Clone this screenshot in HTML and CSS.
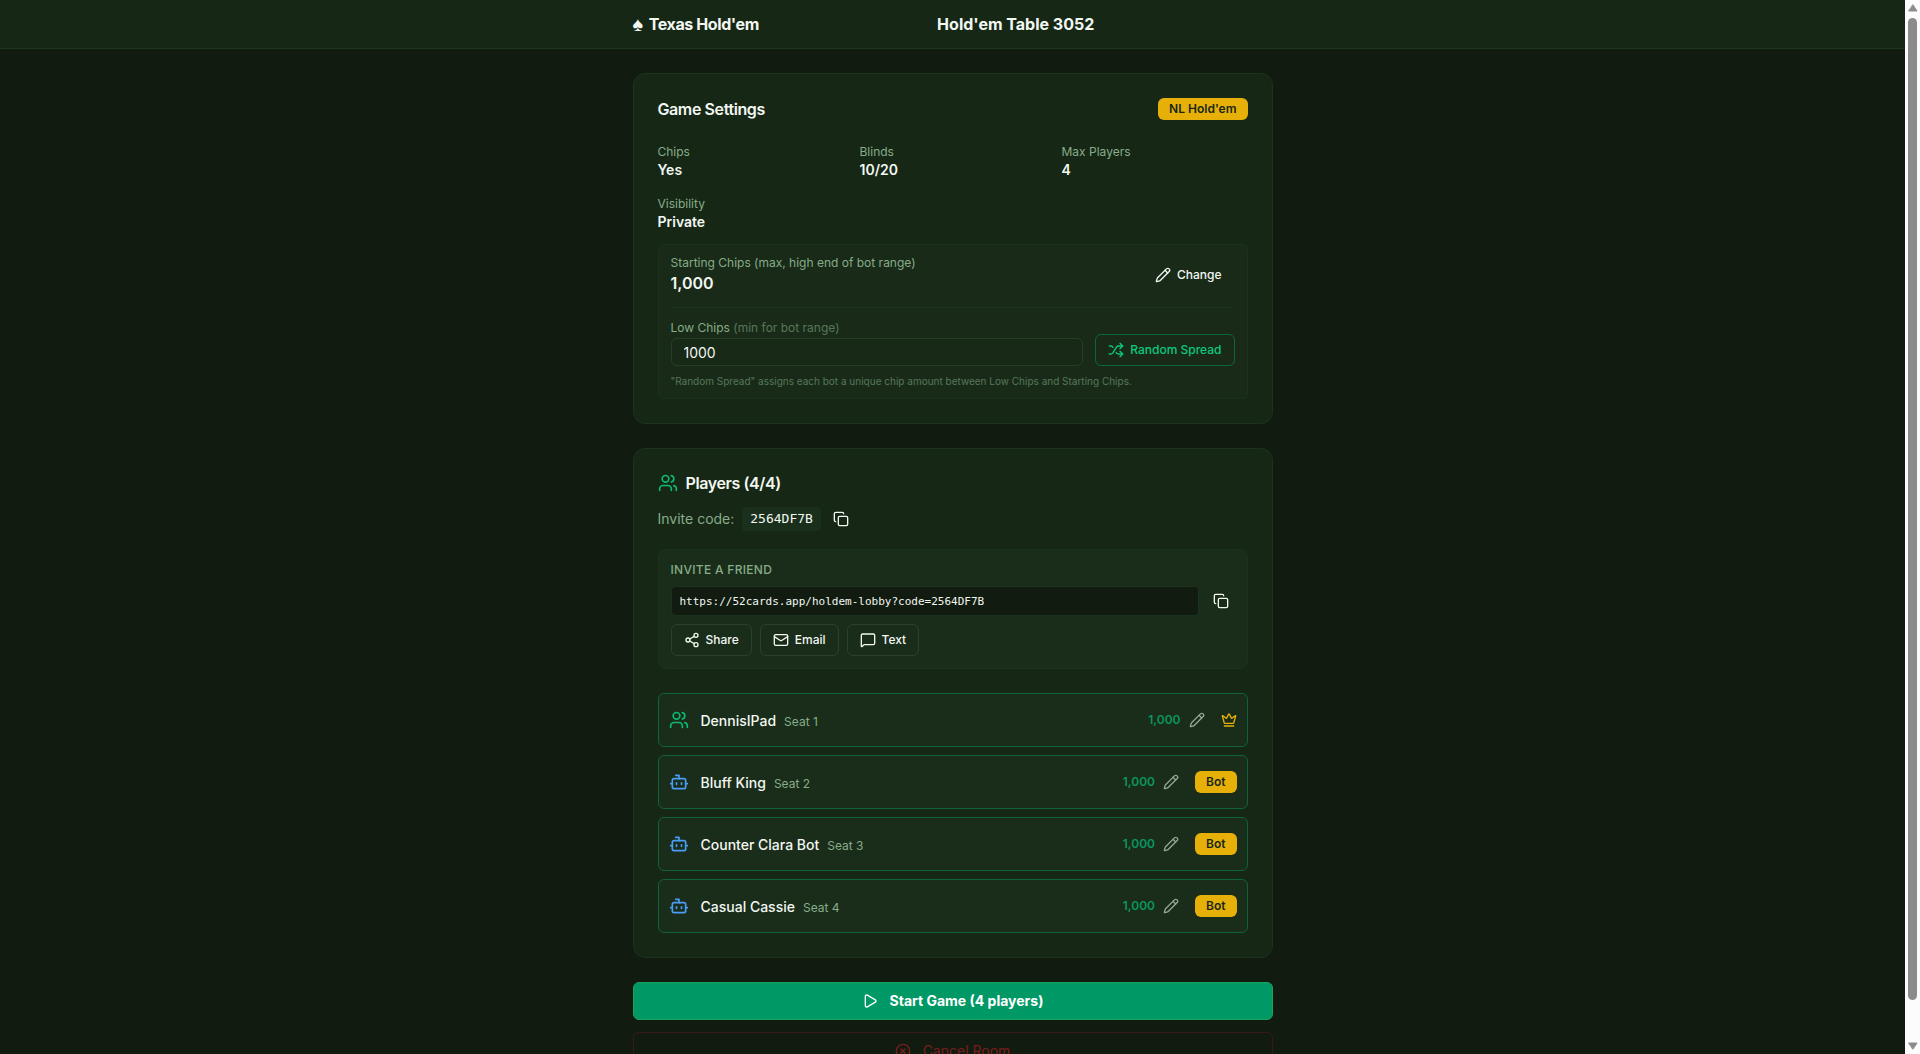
FILE: index.html
```html
<!DOCTYPE html>
<html lang="en">
<head>
    <meta charset="UTF-8">
    <meta name="viewport" content="width=device-width, initial-scale=1.0">
    <title>Hold'em Table 3052</title>
    <link rel="stylesheet" href="styles.css">
</head>
<body>
    <!-- shared icons -->
    <svg class="sprite" aria-hidden="true">
        <symbol id="pencil" viewBox="0 0 24 24"><path d="M21.174 6.812a1 1 0 0 0-3.986-3.987L3.842 16.174a2 2 0 0 0-.5.83l-1.321 4.352a.5.5 0 0 0 .623.622l4.353-1.32a2 2 0 0 0 .83-.497z"/><path d="m15 5 4 4"/></symbol>
        <symbol id="shuffle" viewBox="0 0 24 24"><path d="m18 14 4 4-4 4"/><path d="m18 2 4 4-4 4"/><path d="M2 18h1.973a4 4 0 0 0 3.3-1.7l5.454-8.6a4 4 0 0 1 3.3-1.7H22"/><path d="M2 6h1.972a4 4 0 0 1 3.6 2.2"/><path d="M22 18h-6.041a4 4 0 0 1-3.3-1.8l-.359-.45"/></symbol>
        <symbol id="users" viewBox="0 0 24 24"><path d="M16 21v-2a4 4 0 0 0-4-4H6a4 4 0 0 0-4 4v2"/><circle cx="9" cy="7" r="4"/><path d="M22 21v-2a4 4 0 0 0-3-3.87"/><path d="M16 3.13a4 4 0 0 1 0 7.75"/></symbol>
        <symbol id="copy" viewBox="0 0 24 24"><rect width="14" height="14" x="8" y="8" rx="2"/><path d="M4 16c-1.1 0-2-.9-2-2V4c0-1.1.9-2 2-2h10c1.1 0 2 .9 2 2"/></symbol>
        <symbol id="share" viewBox="0 0 24 24"><circle cx="18" cy="5" r="3"/><circle cx="6" cy="12" r="3"/><circle cx="18" cy="19" r="3"/><path d="m8.59 13.51 6.83 3.98"/><path d="m15.41 6.51-6.82 3.98"/></symbol>
        <symbol id="mail" viewBox="0 0 24 24"><rect width="20" height="16" x="2" y="4" rx="2"/><path d="m22 7-8.97 5.7a1.94 1.94 0 0 1-2.06 0L2 7"/></symbol>
        <symbol id="message" viewBox="0 0 24 24"><path d="M22 17a2 2 0 0 1-2 2H6.828a2 2 0 0 0-1.414.586l-2.202 2.202A.71.71 0 0 1 2 21.286V5a2 2 0 0 1 2-2h16a2 2 0 0 1 2 2z"/></symbol>
        <symbol id="bot" viewBox="0 0 24 24"><path d="M12 8V4H8"/><rect width="16" height="12" x="4" y="8" rx="2"/><path d="M2 14h2"/><path d="M20 14h2"/><path d="M15 13v2"/><path d="M9 13v2"/></symbol>
        <symbol id="crown" viewBox="0 0 24 24"><path d="M11.562 3.266a.5.5 0 0 1 .876 0L15.39 8.87a1 1 0 0 0 1.516.294L21.183 5.5a.5.5 0 0 1 .798.519l-2.834 10.246a1 1 0 0 1-.956.734H5.81a1 1 0 0 1-.957-.734L2.02 6.02a.5.5 0 0 1 .798-.519l4.276 3.664a1 1 0 0 0 1.516-.294z"/><path d="M5 21h14"/></symbol>
        <symbol id="play" viewBox="0 0 24 24"><path d="M5 5a2 2 0 0 1 3.008-1.728l11.997 6.998a2 2 0 0 1 .003 3.458l-12 7A2 2 0 0 1 5 19z"/></symbol>
        <symbol id="circle-x" viewBox="0 0 24 24"><circle cx="12" cy="12" r="10"/><path d="m15 9-6 6"/><path d="m9 9 6 6"/></symbol>
    </svg>

    <div class="page">
        <header class="topbar">
            <div class="container topbar-inner">
                <div class="brand"><span class="spade">♠</span><span>Texas Hold'em</span></div>
                <h1>Hold'em Table 3052</h1>
                <div></div>
            </div>
        </header>

        <main class="container content">
            <section class="card">
                <div class="card-header">
                    <h2>Game Settings</h2>
                    <span class="badge">NL Hold'em</span>
                </div>

                <dl class="settings">
                    <div><dt>Chips</dt><dd>Yes</dd></div>
                    <div><dt>Blinds</dt><dd>10/20</dd></div>
                    <div><dt>Max Players</dt><dd>4</dd></div>
                    <div><dt>Visibility</dt><dd>Private</dd></div>
                </dl>

                <div class="chips-box">
                    <div class="chips-row">
                        <div>
                            <div class="label">Starting Chips (max, high end of bot range)</div>
                            <div class="chips-value">1,000</div>
                        </div>
                        <button class="btn btn-ghost"><svg class="icon"><use href="#pencil"/></svg>Change</button>
                    </div>
                    <div class="low-row">
                        <div class="field">
                            <label class="label" for="low-chips">Low Chips <span class="dim">(min for bot range)</span></label>
                            <input id="low-chips" type="text" inputmode="numeric" value="1000">
                        </div>
                        <button class="btn btn-green"><svg class="icon"><use href="#shuffle"/></svg>Random Spread</button>
                    </div>
                    <p class="hint">"Random Spread" assigns each bot a unique chip amount between Low Chips and Starting Chips.</p>
                </div>
            </section>

            <section class="card">
                <h2 class="players-title"><svg class="icon-lg green"><use href="#users"/></svg>Players (4/4)</h2>
                <div class="invite-code">
                    <span>Invite code:</span>
                    <code>2564DF7B</code>
                    <button class="icon-btn" aria-label="Copy invite code"><svg class="icon"><use href="#copy"/></svg></button>
                </div>

                <div class="invite-box">
                    <h3>Invite a friend</h3>
                    <div class="link-row">
                        <input class="link" type="text" readonly aria-label="Invite link" value="https://52cards.app/holdem-lobby?code=2564DF7B">
                        <button class="icon-btn" aria-label="Copy invite link"><svg class="icon"><use href="#copy"/></svg></button>
                    </div>
                    <div class="share-row">
                        <button class="btn btn-outline"><svg class="icon"><use href="#share"/></svg>Share</button>
                        <button class="btn btn-outline"><svg class="icon"><use href="#mail"/></svg>Email</button>
                        <button class="btn btn-outline"><svg class="icon"><use href="#message"/></svg>Text</button>
                    </div>
                </div>

                <ul class="players">
                    <li class="player">
                        <svg class="icon-lg green"><use href="#users"/></svg>
                        <div class="who"><span class="name">DennisIPad</span><span class="seat">Seat 1</span></div>
                        <button class="stack" aria-label="Edit chips for DennisIPad">1,000<svg class="icon"><use href="#pencil"/></svg></button>
                        <svg class="icon gold"><use href="#crown"/></svg>
                    </li>
                    <li class="player">
                        <svg class="icon-lg blue"><use href="#bot"/></svg>
                        <div class="who"><span class="name">Bluff King</span><span class="seat">Seat 2</span></div>
                        <button class="stack" aria-label="Edit chips for Bluff King">1,000<svg class="icon"><use href="#pencil"/></svg></button>
                        <span class="badge">Bot</span>
                    </li>
                    <li class="player">
                        <svg class="icon-lg blue"><use href="#bot"/></svg>
                        <div class="who"><span class="name">Counter Clara Bot</span><span class="seat">Seat 3</span></div>
                        <button class="stack" aria-label="Edit chips for Counter Clara Bot">1,000<svg class="icon"><use href="#pencil"/></svg></button>
                        <span class="badge">Bot</span>
                    </li>
                    <li class="player">
                        <svg class="icon-lg blue"><use href="#bot"/></svg>
                        <div class="who"><span class="name">Casual Cassie</span><span class="seat">Seat 4</span></div>
                        <button class="stack" aria-label="Edit chips for Casual Cassie">1,000<svg class="icon"><use href="#pencil"/></svg></button>
                        <span class="badge">Bot</span>
                    </li>
                </ul>
            </section>

            <div class="actions">
                <button class="action start"><svg class="icon"><use href="#play"/></svg>Start Game (4 players)</button>
                <button class="action cancel"><svg class="icon"><use href="#circle-x"/></svg>Cancel Room</button>
            </div>
        </main>
    </div>

    <div class="scrollbar" aria-hidden="true">
        <svg class="arrow" viewBox="0 0 10 8"><path d="M5 1 9 7H1z"/></svg>
        <div class="thumb"></div>
        <svg class="arrow" viewBox="0 0 10 8"><path d="M1 1h8L5 7z"/></svg>
    </div>
</body>
</html>
```
FILE: styles.css
```css
* {
    box-sizing: border-box;
}

body {
    display: flex;
    height: 100vh;
    margin: 0;
    overflow: hidden;
    background: #111b10;
    color: #f2f7f2;
    font-family: "Inter", sans-serif;
    font-size: 14px;
    line-height: 20px;
}

h1, h2, h3, p, dl, dd, ul {
    margin: 0;
    padding: 0;
}

button, input {
    font: inherit;
    color: inherit;
}

button {
    background: none;
    border: 0;
    padding: 0;
    cursor: pointer;
}

svg {
    flex-shrink: 0;
    fill: none;
    stroke: currentColor;
    stroke-width: 2;
    stroke-linecap: round;
    stroke-linejoin: round;
}

.sprite {
    position: absolute;
    width: 0;
    height: 0;
}

.icon {
    width: 16px;
    height: 16px;
}

.icon-lg {
    width: 20px;
    height: 20px;
}

.green { color: #0cb873; }
.blue { color: #4a9cf5; }
.gold { color: #e7b008; }

.page {
    flex: 1;
    min-width: 0;
    overflow: hidden;
}

.container {
    max-width: 640px;
    margin: 0 auto;
}

/* header */
.topbar {
    background: #162716;
    border-bottom: 1px solid #1d371f;
}

.topbar-inner {
    display: flex;
    align-items: center;
    justify-content: space-between;
    height: 48px;
}

.brand {
    display: flex;
    align-items: center;
    gap: 6px;
    font-size: 16px;
    font-weight: 700;
    letter-spacing: -0.025em;
}

.spade {
    font-size: 20px;
}

h1, h2 {
    font-size: 16px;
    font-weight: 600;
    line-height: 20px;
}

h1 {
    font-weight: 700;
}

h2 {
    letter-spacing: -0.025em;
}

.content {
    display: flex;
    flex-direction: column;
    gap: 24px;
    padding: 24px 0;
}

/* cards */
.card {
    padding: 24px;
    background: #162716;
    border: 1px solid #1b331c;
    border-radius: 12px;
}

.card-header {
    display: flex;
    align-items: center;
    justify-content: space-between;
    margin-bottom: 24px;
}

.badge {
    padding: 3px 11px;
    border-radius: 6px;
    background: #e7b008;
    color: #172717;
    font-size: 12px;
    font-weight: 600;
    line-height: 16px;
}

.settings {
    display: grid;
    grid-template-columns: repeat(3, 1fr);
    gap: 16px;
    margin-bottom: 12px;
}

.settings dt,
.label {
    display: block;
    color: #86ac89;
    font-size: 12px;
    line-height: 16px;
}

.settings dd {
    font-weight: 600;
}

.chips-box {
    padding: 10px 12px 9px;
    background: #192b18;
    border: 1px solid #1b331c;
    border-radius: 6px;
}

.chips-row {
    display: flex;
    align-items: center;
    justify-content: space-between;
    padding-bottom: 12px;
    border-bottom: 1px solid #1b331c;
}

.chips-value {
    font-size: 16px;
    font-weight: 600;
    line-height: 24px;
}

.btn {
    display: inline-flex;
    align-items: center;
    gap: 6px;
    height: 32px;
    padding: 0 12px;
    border: 1px solid transparent;
    border-radius: 6px;
    font-size: 12px;
    font-weight: 500;
}

.btn-green {
    border-color: #0b673e;
    color: #0cc880;
}

.btn-outline {
    border-color: #29422b;
}

.low-row {
    display: flex;
    align-items: flex-end;
    gap: 12px;
    padding-top: 12px;
}

.field {
    flex: 1;
}

.dim {
    color: #56775a;
}

.field input {
    display: block;
    width: 100%;
    height: 28px;
    margin-top: 2px;
    padding: 0 12px;
    background: #182917;
    border: 1px solid #234025;
    border-radius: 6px;
    outline: none;
}

.hint {
    margin-top: 8px;
    color: #56775a;
    font-size: 10px;
    line-height: 15px;
}

/* invite */
.players-title {
    display: flex;
    align-items: center;
    gap: 8px;
}

.invite-code {
    display: flex;
    align-items: center;
    gap: 8px;
    margin-top: 10px;
    color: #86ac89;
}

.invite-code code {
    padding: 2px 8px;
    background: #1b301c;
    border-radius: 4px;
    color: #f2f7f2;
    font-family: "DejaVu Sans Mono", monospace;
    font-size: 13px;
}

.icon-btn {
    display: flex;
    align-items: center;
    justify-content: center;
    width: 24px;
    height: 32px;
    color: #f2f7f2;
}

.invite-box {
    margin: 14px 0 24px;
    padding: 12px;
    background: #1a2d1a;
    border: 1px solid #1b331c;
    border-radius: 8px;
}

.invite-box h3 {
    color: #86ac89;
    font-size: 12px;
    font-weight: 500;
    line-height: 16px;
    text-transform: uppercase;
    letter-spacing: 0.025em;
}

.link-row {
    display: flex;
    align-items: center;
    gap: 8px;
    margin: 7px 0;
}

.link {
    flex: 1;
    height: 30px;
    padding: 0 8px;
    background: #111b10;
    border: 1px solid #1b331c;
    border-radius: 4px;
    outline: none;
    font-family: "DejaVu Sans Mono", monospace;
    font-size: 11px;
}

.link-row .icon-btn {
    width: 28px;
}

.share-row {
    display: flex;
    gap: 8px;
}

/* players */
.players {
    display: flex;
    flex-direction: column;
    gap: 8px;
    list-style: none;
}

.player {
    display: flex;
    align-items: center;
    gap: 16px;
    height: 54px;
    padding: 0 10px;
    background: #1a2d1a;
    border: 1px solid #10623b;
    border-radius: 6px;
}

.who {
    display: flex;
    flex: 1;
    align-items: baseline;
    gap: 8px;
    margin-left: -4px;
    padding-top: 2px;
}

.name {
    font-weight: 500;
}

.seat {
    color: #86ac89;
    font-size: 12px;
}

.stack {
    display: flex;
    align-items: center;
    gap: 8px;
    color: #0a9660;
    font-size: 12px;
    font-weight: 600;
}

.stack .icon {
    color: #93a894;
}

/* bottom buttons */
.actions {
    display: flex;
    flex-direction: column;
    gap: 12px;
}

.action {
    display: flex;
    align-items: center;
    justify-content: center;
    gap: 12px;
    height: 38px;
    border: 1px solid transparent;
    border-radius: 6px;
}

.start {
    background: #009966;
    border-color: #1ba35c;
    color: #fff;
    font-weight: 700;
}

.cancel {
    border-color: #3c1717;
    color: #7b1d1c;
}

/* scrollbar */
.scrollbar {
    display: flex;
    flex-direction: column;
    align-items: center;
    justify-content: space-between;
    gap: 6px;
    width: 15px;
    padding: 4px 0;
    background: #fcfcfc;
}

.arrow {
    width: 10px;
    height: 8px;
    fill: #8b8b8b;
    stroke: #8b8b8b;
    stroke-width: 1;
}

.thumb {
    flex: 1;
    width: 9px;
    margin-bottom: 36px;
    background: #8b8b8b;
    border-radius: 5px;
}
```
